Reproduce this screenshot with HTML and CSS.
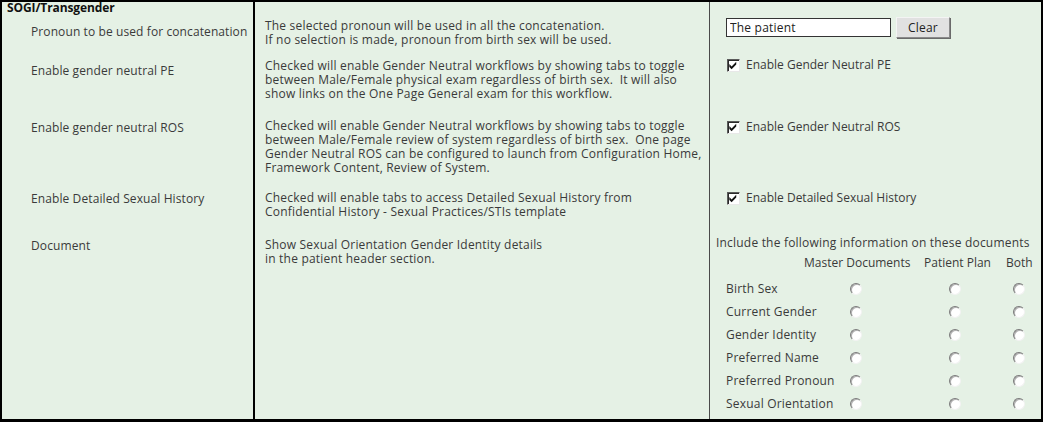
FILE: index.html
```html
<!DOCTYPE html>
<html lang="en">
<head>
    <meta charset="UTF-8">
    <meta name="viewport" content="width=device-width, initial-scale=1.0">
    <title>SOGI/Transgender</title>
    <link rel="stylesheet" href="styles.css">
</head>
<body>

    <div class="frame">
        <div class="settings">
            <!-- pronoun -->
            <div class="cell label first">
                <div class="section-title">SOGI/Transgender</div>
                <div class="label-text">Pronoun to be used for concatenation</div>
            </div>
            <div class="cell desc r1">The selected pronoun will be used in all the concatenation.<br>If no selection is made, pronoun from birth sex will be used.</div>
            <div class="cell control r1">
                <div class="pronoun">
                    <input type="text" class="text-box" value="The patient">
                    <button class="btn">Clear</button>
                </div>
            </div>

            <!-- PE -->
            <div class="cell label r2">Enable gender neutral PE</div>
            <div class="cell desc r2">Checked will enable Gender Neutral workflows by showing tabs to toggle<br>between Male/Female physical exam regardless of birth sex.&nbsp; It will also<br>show links on the One Page General exam for this workflow.</div>
            <div class="cell control r2">
                <label class="check"><span class="box"><svg viewBox="0 0 13 13" width="13" height="13"><path d="M2.5 5 L5 7.5 L10 2.5 L10 5.5 L5 10.5 L2.5 8 Z" fill="#111"/></svg></span>Enable Gender Neutral PE</label>
            </div>

            <!-- ROS -->
            <div class="cell label r3">Enable gender neutral ROS</div>
            <div class="cell desc r3">Checked will enable Gender Neutral workflows by showing tabs to toggle<br>between Male/Female review of system regardless of birth sex.&nbsp; One page<br>Gender Neutral ROS can be configured to launch from Configuration Home,<br>Framework Content, Review of System.</div>
            <div class="cell control r3">
                <label class="check"><span class="box"><svg viewBox="0 0 13 13" width="13" height="13"><path d="M2.5 5 L5 7.5 L10 2.5 L10 5.5 L5 10.5 L2.5 8 Z" fill="#111"/></svg></span>Enable Gender Neutral ROS</label>
            </div>

            <!-- sexual history -->
            <div class="cell label r4">Enable Detailed Sexual History</div>
            <div class="cell desc r4">Checked will enable tabs to access Detailed Sexual History from<br>Confidential History - Sexual Practices/STIs template</div>
            <div class="cell control r4">
                <label class="check"><span class="box"><svg viewBox="0 0 13 13" width="13" height="13"><path d="M2.5 5 L5 7.5 L10 2.5 L10 5.5 L5 10.5 L2.5 8 Z" fill="#111"/></svg></span>Enable Detailed Sexual History</label>
            </div>

            <!-- document -->
            <div class="cell label r5">Document</div>
            <div class="cell desc r5">Show Sexual Orientation Gender Identity details<br>in the patient header section.</div>
            <div class="cell control r5">
                <div class="doc-intro">Include the following information on these documents</div>
                <div class="doc-head">
                    <span></span>
                    <span>Master Documents</span>
                    <span>Patient Plan</span>
                    <span>Both</span>
                </div>
                <div class="doc-grid">
                    <span>Birth Sex</span>
                    <input type="radio" name="birth" class="radio">
                    <input type="radio" name="birth" class="radio">
                    <input type="radio" name="birth" class="radio">

                    <span>Current Gender</span>
                    <input type="radio" name="current" class="radio">
                    <input type="radio" name="current" class="radio">
                    <input type="radio" name="current" class="radio">

                    <span>Gender Identity</span>
                    <input type="radio" name="identity" class="radio">
                    <input type="radio" name="identity" class="radio">
                    <input type="radio" name="identity" class="radio">

                    <span>Preferred Name</span>
                    <input type="radio" name="pname" class="radio">
                    <input type="radio" name="pname" class="radio">
                    <input type="radio" name="pname" class="radio">

                    <span>Preferred Pronoun</span>
                    <input type="radio" name="ppronoun" class="radio">
                    <input type="radio" name="ppronoun" class="radio">
                    <input type="radio" name="ppronoun" class="radio">

                    <span>Sexual Orientation</span>
                    <input type="radio" name="orient" class="radio">
                    <input type="radio" name="orient" class="radio">
                    <input type="radio" name="orient" class="radio">
                </div>
            </div>
        </div>
    </div>

</body>
</html>
```

FILE: styles.css
```css
* {
    margin: 0;
    padding: 0;
    box-sizing: border-box;
}

body {
    background: #000;
    font-family: 'Open Sans', 'DejaVu Sans', sans-serif;
    font-size: 12px;
    color: #3a3a3a;
}

.frame {
    width: 1043px;
    height: 422px;
    border: 2px solid #000;
    border-bottom-width: 3px;
    background: #e5f1e5;
}

.settings {
    display: grid;
    grid-template-columns: 253px 455px 1fr;
    grid-template-rows: 54px 60px 72px 44px 1fr;
    height: 100%;
    line-height: 14px;
    letter-spacing: 0.2px;
    white-space: nowrap;
}

.cell.label {
    border-right: 2px solid #000;
    padding-left: 29px;
    letter-spacing: 0.1px;
}

.cell.desc {
    border-right: 1px solid #4a4a4a;
    padding-left: 10px;
}

.cell.control {
    padding-left: 16px;
}

.cell.label.first {
    padding-left: 0;
}

.section-title {
    font-weight: bold;
    color: #111;
    font-size: 12px;
    line-height: 12px;
    padding-left: 5px;
    letter-spacing: -0.1px;
}

.label-text {
    margin-top: 11px;
    padding-left: 29px;
}

/* row offsets */
.desc.r1 { padding-top: 17px; }
.control.r1 { padding-top: 15px; }

.label.r2 { padding-top: 8px; }
.desc.r2 { padding-top: 3px; }
.control.r2 { padding-top: 2px; }

.label.r3 { padding-top: 5px; }
.desc.r3 { padding-top: 3px; }
.control.r3 { padding-top: 4px; }

.label.r4 { padding-top: 4px; }
.desc.r4 { padding-top: 3px; }
.control.r4 { padding-top: 3px; }

.label.r5 { padding-top: 7px; }
.desc.r5 { padding-top: 6px; }
.control.r5 { padding-top: 4px; padding-left: 6px; }

.pronoun {
    display: flex;
    align-items: center;
    gap: 5px;
}

.text-box {
    width: 165px;
    height: 19px;
    border: 1px solid #333;
    background: #fff;
    font-family: inherit;
    font-size: 12px;
    letter-spacing: 0.2px;
    color: #222;
    padding: 0 3px;
    outline: none;
}

.btn {
    width: 54px;
    height: 21px;
    font-family: inherit;
    font-size: 12px;
    letter-spacing: 0.2px;
    color: #222;
    background: #e1e1e1;
    border: 1px solid;
    border-color: #f4f4f4 #8a8a8a #8a8a8a #f4f4f4;
    box-shadow: 1px 1px 0 #6a6a6a;
}

.check {
    display: flex;
    align-items: center;
    gap: 6px;
    padding-left: 1px;
    letter-spacing: 0;
}

.check .box {
    width: 13px;
    height: 13px;
    background: #fff;
    border: 1px solid;
    border-color: #5a5a5a #e8e8e8 #e8e8e8 #5a5a5a;
    box-shadow: inset 1px 1px 0 #2a2a2a;
    display: flex;
}

.check .box svg {
    margin: -1px 0 0 -1px;
}

.doc-intro {
    height: 14px;
}

.doc-head {
    display: grid;
    grid-template-columns: 88px 120px 82px auto;
    margin-top: 6px;
    height: 14px;
    letter-spacing: 0;
}

.doc-grid {
    display: grid;
    grid-template-columns: 124px 99px 64px 1fr;
    grid-auto-rows: 23px;
    align-items: center;
    margin-top: 7px;
    padding-left: 10px;
}

.radio {
    appearance: none;
    -webkit-appearance: none;
    width: 12px;
    height: 12px;
    border-radius: 50%;
    border: 1px solid;
    border-color: #7a7a7a #f2f2f2 #f2f2f2 #7a7a7a;
    background: #fff;
    box-shadow: inset 1px 1px 0 #b0b0b0;
}
```
